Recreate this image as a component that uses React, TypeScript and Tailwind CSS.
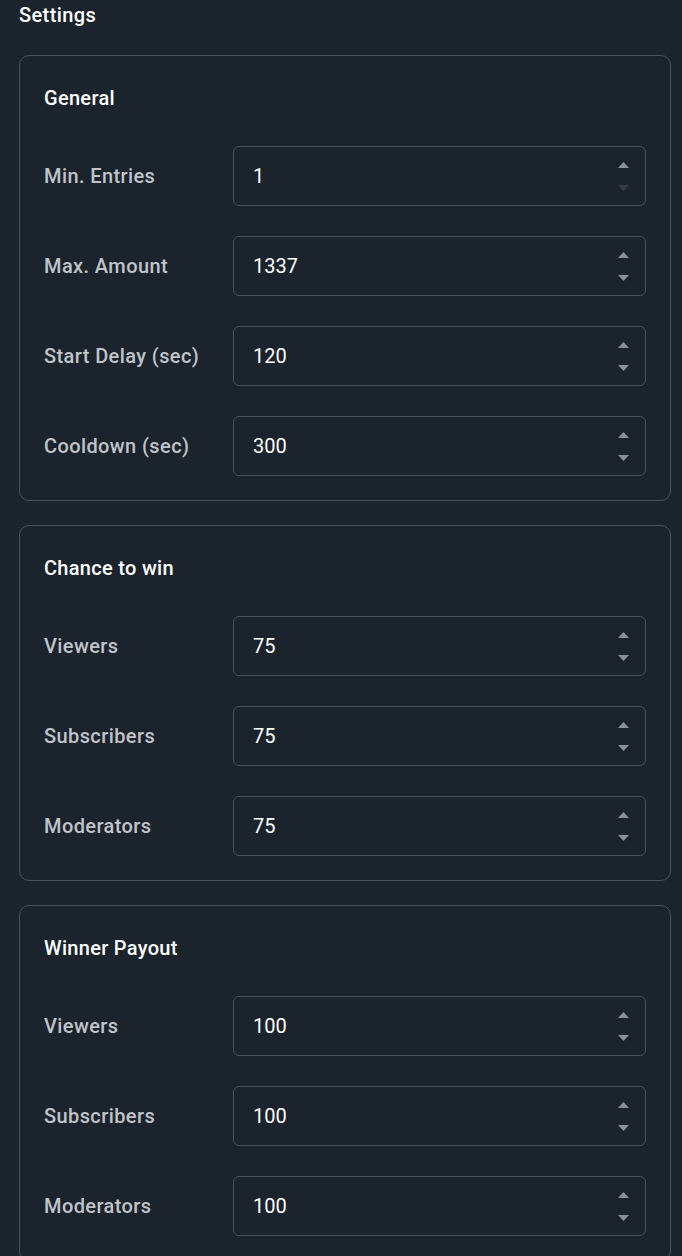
import React from 'react';

type Field = { label: string; value: string; atMin?: boolean };

const sections: { title: string; fields: Field[] }[] = [
  {
    title: 'General',
    fields: [
      { label: 'Min. Entries', value: '1', atMin: true },
      { label: 'Max. Amount', value: '1337' },
      { label: 'Start Delay (sec)', value: '120' },
      { label: 'Cooldown (sec)', value: '300' },
    ],
  },
  {
    title: 'Chance to win',
    fields: [
      { label: 'Viewers', value: '75' },
      { label: 'Subscribers', value: '75' },
      { label: 'Moderators', value: '75' },
    ],
  },
  {
    title: 'Winner Payout',
    fields: [
      { label: 'Viewers', value: '100' },
      { label: 'Subscribers', value: '100' },
      { label: 'Moderators', value: '100' },
    ],
  },
];

const Spinner: React.FC<{ atMin?: boolean }> = ({ atMin }) => (
  <div className="flex flex-col items-center gap-[17px] mr-[16px]">
    <svg width="11" height="6" viewBox="0 0 11 6">
      <path d="M0 6 L5.5 0 L11 6 Z" fill="#8b9097" />
    </svg>
    <svg width="11" height="6" viewBox="0 0 11 6">
      <path d="M0 0 L11 0 L5.5 6 Z" fill={atMin ? '#363c44' : '#8b9097'} />
    </svg>
  </div>
);

const App: React.FC = () => {
  return (
    <div
      className="min-h-screen w-full bg-[#1b232c] text-white pl-[19px] pr-[11px] pt-[3px] pb-[25px]"
      style={{ fontFamily: 'Roboto, "Noto Sans", sans-serif' }}
    >
      {/* Page title */}
      <h1 className="text-[20px] leading-[24px] font-medium tracking-[0.4px] mb-[28px]">Settings</h1>

      <div className="flex flex-col gap-[24px]">
        {sections.map((section) => (
          <div
            key={section.title}
            className="border border-[#4a5159] rounded-[10px] px-[24px] pt-[25px] pb-[24px]"
          >
            <h2 className="text-[20px] leading-[34px] font-medium tracking-[0.3px] mb-[31px]">
              {section.title}
            </h2>
            <div className="flex flex-col gap-[30px]">
              {section.fields.map((f) => (
                <div key={f.label} className="flex items-center">
                  <label className="w-[189px] shrink-0 text-[20px] font-medium tracking-[0.4px] text-[#c0c4c9]">
                    {f.label}
                  </label>
                  <div className="flex-1 h-[60px] border border-[#4a5159] rounded-[6px] flex items-center justify-between pl-[19px]">
                    <span className="text-[20px] text-white">{f.value}</span>
                    <Spinner atMin={f.atMin} />
                  </div>
                </div>
              ))}
            </div>
          </div>
        ))}
      </div>
    </div>
  );
};

export default App;
